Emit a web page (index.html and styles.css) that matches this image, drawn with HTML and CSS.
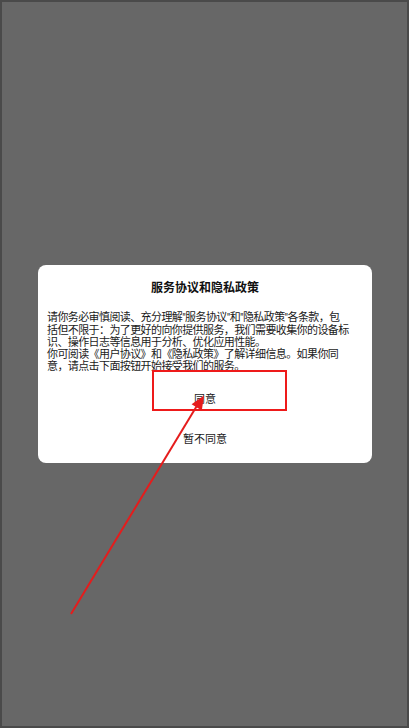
FILE: index.html
```html
<!DOCTYPE html>
<html lang="zh-CN">
<head>
<meta charset="utf-8">
<title>服务协议和隐私政策</title>
<link rel="stylesheet" href="styles.css">
</head>
<body>
<div class="screen">
  <div class="dialog">
    <h1 class="dialog-title">服务协议和隐私政策</h1>
    <div class="dialog-body">
      <p>请你务必审慎阅读、充分理解"服务协议"和"隐私政策"各条款，包<br>括但不限于：为了更好的向你提供服务，我们需要收集你的设备标<br>识、操作日志等信息用于分析、优化应用性能。</p>
      <p>你可阅读《用户协议》和《隐私政策》了解详细信息。如果你同<br>意，请点击下面按钮开始接受我们的服务。</p>
    </div>
    <div class="dialog-actions">
      <button class="btn">同意</button>
      <button class="btn">暂不同意</button>
    </div>
  </div>
</div>
<svg class="annotation" width="409" height="728" viewBox="0 0 409 728">
  <rect x="153" y="371" width="133" height="39" fill="none" stroke="#ee1a1a" stroke-width="2"/>
  <line x1="71" y1="614" x2="198" y2="404" stroke="#e51c1c" stroke-width="2"/>
  <polygon points="204,395.5 201.8,410.5 191.6,404.3" fill="#e51c1c"/>
</svg>
</body>
</html>
```
FILE: styles.css
```css
html, body {
  margin: 0;
  padding: 0;
}
body {
  position: relative;
  width: 409px;
  height: 728px;
  overflow: hidden;
  font-family: Roboto, "Noto Sans CJK SC", sans-serif;
}
.screen {
  box-sizing: border-box;
  width: 409px;
  height: 728px;
  border: 2px solid #4a4a4a;
  background: #676767;
  display: flex;
  align-items: center;
  justify-content: center;
}
.dialog {
  box-sizing: border-box;
  width: 334px;
  background: #ffffff;
  border-radius: 8px;
  padding: 15px 9px 5px;
  margin-left: 1px;
}
.dialog-title {
  margin: 0 0 16px;
  font-size: 12px;
  line-height: 16px;
  font-weight: bold;
  text-align: center;
  color: #111;
}
.dialog-body {
  font-size: 11px;
  letter-spacing: -0.6px;
  line-height: 12.3px;
  color: #1a1a1a;
  white-space: nowrap;
}
.dialog-body p {
  margin: 0;
}
.dialog-actions {
  margin-top: 4px;
  display: flex;
  flex-direction: column;
}
.btn {
  height: 40px;
  border: none;
  background: transparent;
  font-family: inherit;
  font-size: 11px;
  color: #1a1a1a;
  padding: 0;
}
.annotation {
  position: absolute;
  left: 0;
  top: 0;
  pointer-events: none;
}
```
